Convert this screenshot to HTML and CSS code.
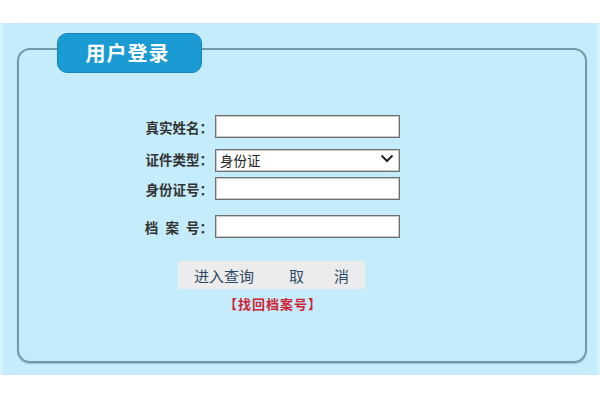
FILE: index.html
```html
<!DOCTYPE html>
<html lang="zh-CN">
<head>
<meta charset="utf-8">
<title>用户登录</title>
<link rel="stylesheet" href="styles.css">
</head>
<body>
<div class="panel">
  <div class="frame">
    <div class="tab">用户登录</div>
    <form class="form">
      <div class="row r1">
        <label class="lbl">真实姓名：</label>
        <input class="field" type="text">
      </div>
      <div class="row r2">
        <label class="lbl">证件类型：</label>
        <span class="selwrap">
          <select class="field sel"><option>身份证</option></select>
          <svg class="chev" width="14" height="9" viewBox="0 0 14 9"><path d="M1.5 1.5 L7 7 L12.5 1.5" fill="none" stroke="#222" stroke-width="2"/></svg>
        </span>
      </div>
      <div class="row r3">
        <label class="lbl">身份证号：</label>
        <input class="field" type="text">
      </div>
      <div class="row r4">
        <label class="lbl spaced">档 案 号：</label>
        <input class="field" type="text">
      </div>
      <div class="btns">
        <button type="button" class="btn b1">进入查询</button>
        <button type="button" class="btn b2">取　　消</button>
      </div>
      <a class="find" href="#">【找回档案号】</a>
    </form>
  </div>
</div>
</body>
</html>
```
FILE: styles.css
```css
html, body {
  margin: 0;
  padding: 0;
  background: #ffffff;
}
body {
  font-family: "Noto Sans CJK SC", "Noto Sans", sans-serif;
  padding-top: 23px;
}
.panel {
  height: 352px;
  box-sizing: border-box;
  background: #c5ecfb;
  border-left: 3px solid #d6f3fd;
  border-right: 3px solid #d6f3fd;
  padding: 25px 10px 0 14px;
}
.frame {
  position: relative;
  height: 315px;
  box-sizing: border-box;
  border: 2px solid #6f9aa8;
  border-radius: 13px;
  box-shadow: 0 1px 1px rgba(60, 110, 130, 0.35);
  padding-top: 65px;
}
.tab {
  position: absolute;
  left: 38px;
  top: -17px;
  width: 145px;
  height: 40px;
  box-sizing: border-box;
  background: #1b9bd3;
  border: 1px solid #1787bb;
  border-radius: 10px;
  color: #ffffff;
  font-size: 20px;
  font-weight: bold;
  letter-spacing: 1px;
  line-height: 38px;
  text-align: center;
  padding-right: 4px;
}
.form {
  display: flex;
  flex-direction: column;
  align-items: flex-start;
  margin: 0;
}
.row {
  display: flex;
  align-items: center;
  height: 23px;
}
.r2 { margin-top: 9px; }
.r3 { margin-top: 7px; }
.r4 { margin-top: 15px; }
.lbl {
  width: 196px;
  box-sizing: border-box;
  text-align: right;
  padding-right: 2px;
  font-size: 13.5px;
  font-weight: bold;
  color: #333333;
  white-space: pre;
}
.spaced {
  word-spacing: 4px;
}
.field {
  width: 185px;
  height: 23px;
  box-sizing: border-box;
  margin: 0;
  border: 1px solid #6f6f6f;
  box-shadow: inset 0 0 0 1px #c9c9c9;
  background: #ffffff;
  font-family: "Noto Sans CJK SC", sans-serif;
  font-size: 13.5px;
  color: #222222;
  padding: 0 4px;
}
.selwrap {
  position: relative;
  display: inline-block;
  height: 23px;
}
.sel {
  appearance: none;
  -webkit-appearance: none;
  border-radius: 0;
  padding: 0 4px;
  line-height: 21px;
}
.chev {
  position: absolute;
  right: 6px;
  top: 7px;
  pointer-events: none;
}
.btns {
  display: flex;
  margin-top: 23px;
  margin-left: 159px;
  width: 187px;
  height: 28px;
  background: #ececec;
}
.btn {
  border: none;
  background: transparent;
  font-family: "Noto Sans CJK SC", sans-serif;
  font-size: 15px;
  color: #2d4a66;
  padding: 0;
  height: 28px;
  white-space: pre;
  cursor: pointer;
}
.b1 {
  margin-left: 16px;
  width: 62px;
  text-align: left;
}
.b2 {
  margin-left: 33px;
  width: 70px;
  text-align: left;
}
.find {
  margin-top: 7px;
  margin-left: 205px;
  font-size: 13px;
  font-weight: bold;
  color: #cf2436;
  text-decoration: none;
  line-height: 16px;
  letter-spacing: 1px;
}
```
